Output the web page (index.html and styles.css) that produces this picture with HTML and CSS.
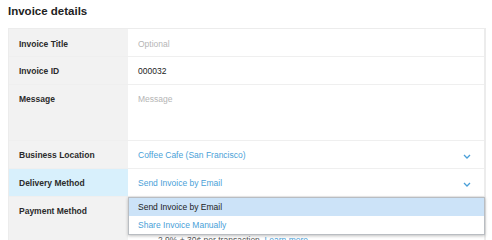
FILE: index.html
```html
<!DOCTYPE html>
<html lang="en">
<head>
    <meta charset="UTF-8">
    <title>Invoice details</title>
    <link rel="stylesheet" href="styles.css">
</head>
<body>
    <h2 class="section-title">Invoice details</h2>
    <div class="details">
        <div class="row">
            <div class="label">Invoice Title</div>
            <div class="value placeholder">Optional</div>
        </div>
        <div class="row">
            <div class="label">Invoice ID</div>
            <div class="value">000032</div>
        </div>
        <div class="row row-tall">
            <div class="label">Message</div>
            <div class="value placeholder">Message</div>
        </div>
        <div class="row">
            <div class="label">Business Location</div>
            <div class="value select">
                <span>Coffee Cafe (San Francisco)</span>
                <svg class="chevron" width="8" height="5" viewBox="0 0 8 5"><path d="M1 1l3 3 3-3" fill="none" stroke="#4a9fd8" stroke-width="1.3"/></svg>
            </div>
        </div>
        <div class="row active">
            <div class="label">Delivery Method</div>
            <div class="value select">
                <span>Send Invoice by Email</span>
                <svg class="chevron" width="8" height="5" viewBox="0 0 8 5"><path d="M1 1l3 3 3-3" fill="none" stroke="#4a9fd8" stroke-width="1.3"/></svg>
                <ul class="menu">
                    <li class="selected">Send Invoice by Email</li>
                    <li>Share Invoice Manually</li>
                </ul>
            </div>
        </div>
        <div class="row row-payment">
            <div class="label">Payment Method</div>
            <div class="value payment">
                <div class="option">Allow customers to pay by card</div>
                <div class="note">2.9% + 30¢ per transaction. <a href="#">Learn more</a></div>
            </div>
        </div>
    </div>
</body>
</html>
```

FILE: styles.css
```css
* {
    box-sizing: border-box;
}
body {
    margin: 0;
    padding: 0 6px 0 8px;
    font-family: "Liberation Sans", Arial, sans-serif;
    font-size: 8.5px;
    color: #333;
    background: #fff;
}
.section-title {
    margin: 0;
    padding: 5px 0 0;
    height: 28px;
    font-size: 11.5px;
    font-weight: bold;
    color: #222;
}
.details {
    border: 1px solid #ececec;
    border-right-width: 2px;
}
.row {
    display: grid;
    grid-template-columns: 119px 1fr;
    height: 28px;
    border-top: 1px solid #efefef;
}
.row:first-child {
    border-top: none;
    height: 27px;
}
.row-tall {
    height: 56px;
}
.row-payment {
    height: 60px;
}
.label {
    background: #f2f2f2;
    padding: 9px 0 0 10px;
    font-weight: bold;
    color: #2b2b2b;
}
.row:first-child .label,
.row:first-child .value {
    padding-top: 10px;
}
.active .label {
    background: #d8f0fc;
}
.value {
    position: relative;
    padding: 9px 10px 0 10px;
    color: #222;
}
.placeholder {
    color: #b5b5b5;
}
.select {
    display: flex;
    justify-content: space-between;
    align-items: flex-start;
    color: #4a9fd8;
}
.chevron {
    margin: 4px 3px 0 0;
}
.menu {
    position: absolute;
    top: 28px;
    left: 0;
    right: -1px;
    margin: 0;
    padding: 0;
    list-style: none;
    background: #fff;
    border: 1px solid #b9bdc2;
    box-shadow: 0 1px 3px rgba(0, 0, 0, 0.25);
    z-index: 2;
}
.menu li {
    height: 18px;
    line-height: 18px;
    padding: 0 9px;
    color: #4a9fd8;
}
.menu li.selected {
    background: #cce3f8;
    color: #222;
}
.payment .option {
    height: 29px;
}
.note {
    padding-left: 20px;
    color: #555;
}
.note a {
    color: #4a9fd8;
    text-decoration: none;
}
```
